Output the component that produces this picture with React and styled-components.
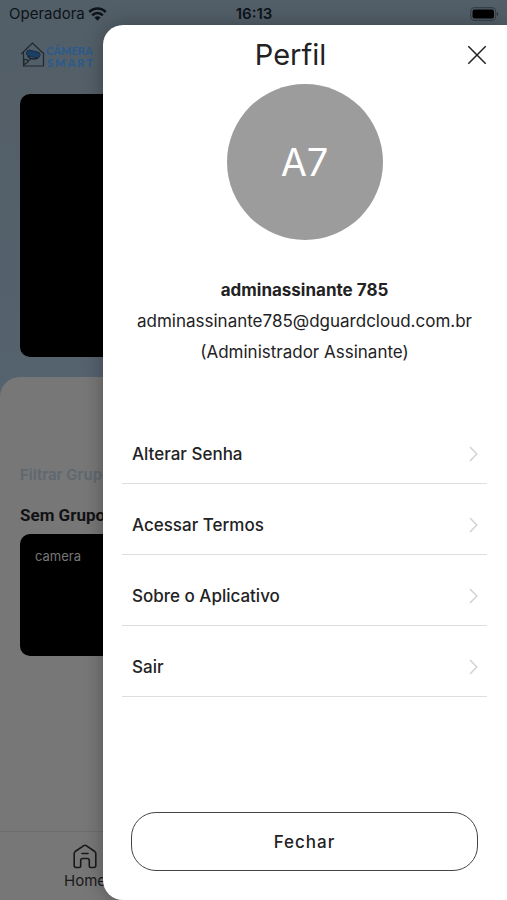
import React from "react";
import styled, { createGlobalStyle } from "styled-components";

const GlobalStyle = createGlobalStyle`
  *, *::before, *::after { box-sizing: border-box; }
  body {
    margin: 0;
    font-family: Inter, "Liberation Sans", sans-serif;
    color: #222224;
  }
  h1, h2, p, ul { margin: 0; padding: 0; }
  button, input { font: inherit; color: inherit; }
`;

const Screen = styled.div`
  position: relative;
  min-height: 100vh;
  overflow: hidden;
  display: flex;
  flex-direction: column;
  background: linear-gradient(#525f68 0, #545f68 100px, #55636f 400px);
`;

const StatusBar = styled.header`
  display: grid;
  grid-template-columns: 1fr auto 1fr;
  align-items: center;
  height: 27px;
  padding: 0 8px 0 9px;
  font-size: 15px;
  color: #0d1318;
`;

const Carrier = styled.span`
  display: flex;
  align-items: center;
  gap: 3px;
`;

const Clock = styled.span`
  font-weight: 600;
`;

const BatteryIcon = styled.svg`
  justify-self: end;
`;

const Brand = styled.div`
  display: flex;
  align-items: center;
  height: 67px;
  padding: 0 20px 11px;
`;

const Feature = styled.div`
  height: 263px;
  margin: 0 20px;
  border-radius: 10px;
  background: #000;
`;

const Sheet = styled.main`
  flex: 1;
  display: flex;
  flex-direction: column;
  margin-top: 20px;
  padding-top: 85px;
  border-radius: 20px 20px 0 0;
  background: #777;
`;

const Filter = styled.input`
  display: block;
  height: 24px;
  margin: 0 20px;
  padding: 0;
  border: 0;
  background: none;
  font-size: 15px;
  font-weight: 600;
  &::placeholder { color: #5f686f; opacity: 1; }
`;

const GroupTitle = styled.h2`
  margin: 17px 20px 7px;
  font-size: 17px;
  line-height: 24px;
  font-family: Roboto, sans-serif;
  font-weight: 700;
  color: #121214;
`;

const CameraCard = styled.section`
  height: 122px;
  margin: 0 20px;
  padding: 13px 15px;
  border-radius: 10px;
  background: #000;
  color: #777;
  font-size: 13px;
  line-height: 18px;
`;

const TabBar = styled.nav`
  display: flex;
  height: 69px;
  margin-top: auto;
  padding: 12px 58px 0;
  border-top: 1px solid #6d6d6d;
`;

const Tab = styled.a`
  display: flex;
  flex-direction: column;
  align-items: center;
  gap: 2px;
  width: 54px;
  color: #19191b;
  font-size: 15px;
  line-height: 20px;
  text-decoration: none;
`;

const Drawer = styled.aside`
  position: absolute;
  inset: 25px 0 0 103px;
  display: flex;
  flex-direction: column;
  padding: 0 20px 29px 19px;
  border-radius: 20px 0 0 20px;
  background: #fff;
  box-shadow: 0 0 20px rgba(0, 0, 0, 0.3);
`;

const DrawerHeader = styled.header`
  display: grid;
  grid-template-columns: 1fr 20px;
  gap: 8px;
  align-items: center;
  height: 59px;
`;

const Title = styled.h1`
  text-align: center;
  font-size: 29px;
  font-weight: 400;
  line-height: 40px;
`;

const CloseButton = styled.button`
  display: flex;
  padding: 0;
  border: 0;
  background: none;
  cursor: pointer;
`;

const Avatar = styled.div`
  display: grid;
  place-items: center;
  align-self: center;
  width: 156px;
  height: 156px;
  border-radius: 50%;
  background: #9c9c9c;
  color: #fff;
  font-size: 38px;
`;

const Identity = styled.div`
  margin-top: 35px;
  text-align: center;
  font-size: 17px;
  line-height: 31px;
  white-space: nowrap;
`;

const Name = styled.p`
  font-weight: 700;
`;

const Menu = styled.ul`
  margin-top: 45px;
  list-style: none;
`;

const MenuButton = styled.button`
  display: flex;
  align-items: center;
  justify-content: space-between;
  width: 100%;
  height: 71px;
  padding: 11px 9px 0 10px;
  border: 0;
  border-bottom: 1px solid #dedede;
  background: none;
  font-size: 17px;
  font-weight: 500;
  text-align: left;
  cursor: pointer;
`;

const DismissButton = styled.button`
  height: 59px;
  margin: auto 9px 0;
  border: 1px solid #454547;
  border-radius: 25px;
  background: none;
  font-size: 17px;
  font-weight: 500;
  letter-spacing: 1px;
  cursor: pointer;
`;

const menuItems = ["Alterar Senha", "Acessar Termos", "Sobre o Aplicativo", "Sair"];

function WifiIcon() {
  return (
    <svg width="19" height="14" viewBox="0 0 19 14" aria-hidden="true">
      <path d="M1.3 5a11.300 11.300 0 0 1 16.400 0M4.200 8.300a7.300 7.300 0 0 1 10.600 0" fill="none" stroke="currentColor" strokeWidth="2.600" />
      <path d="M6.500 10.500a4.200 4.200 0 0 1 6 0L9.500 13.700z" fill="currentColor" />
    </svg>
  );
}

function Battery() {
  return (
    <BatteryIcon width="29" height="14" viewBox="0 0 29 14" aria-hidden="true">
      <rect x=".7" y=".7" width="25" height="12.6" rx="3.8" fill="none" stroke="#35414a" strokeWidth="1.2" />
      <rect x="2.5" y="2.5" width="21.5" height="9" rx="2" fill="#000" />
      <path d="M27 5v4c1.600-.6 1.600-3.400 0-4z" fill="#26313a" />
    </BatteryIcon>
  );
}

function Logo() {
  return (
    <svg width="78" height="28" viewBox="0 0 78 28" role="img" aria-label="Câmera Smart">
      <path d="M1.200 13 12.500 2 24 13M3.500 11.500V25h20V11.500" fill="none" stroke="#20282f" strokeWidth="1.200" />
      <g transform="rotate(13 13 14)">
        <rect x="6" y="10" width="14" height="6" rx="3" fill="#1c3f66" stroke="#17283a" strokeWidth=".8" />
        <path d="M8 16.200c3 2.300 7 2.300 10.500-.4" fill="none" stroke="#17283a" strokeWidth="1.400" />
      </g>
      <path d="M4 18.500c2-.5 3.500.3 4.500 2L4 24zM8 19.500l3-1" fill="none" stroke="#20282f" strokeWidth="1.100" />
      <g fill="#2b5b8c" fontFamily="Lato, sans-serif" fontWeight="900">
        <text x="26" y="14" fontSize="11">CÂMERA</text>
        <text x="27" y="26" fontSize="11" letterSpacing="2">SMART</text>
      </g>
    </svg>
  );
}

function HomeIcon() {
  return (
    <svg width="24" height="25" viewBox="0 0 24 25" fill="none" stroke="currentColor" strokeWidth="1.600" strokeLinejoin="round" strokeLinecap="round" aria-hidden="true">
      <path d="M1.200 9.600Q1.200 8.300 2.200 7.500L10.800 1.600q1.200-.8 2.400 0l8.600 5.900q1 .8 1 2.100V21.500q0 2-2 2h-3q-1.500 0-1.500-1.500v-5.500q0-2-2-2H9.700q-2 0-2 2V22q0 1.500-1.500 1.500H3.200q-2 0-2-2z" />
      <path d="M9 9.500h6" />
    </svg>
  );
}

export default function App() {
  return (
    <>
      <GlobalStyle />
      <Screen>
        <StatusBar>
          <Carrier>Operadora <WifiIcon /></Carrier>
          <Clock>16:13</Clock>
          <Battery />
        </StatusBar>
        <Brand><Logo /></Brand>
        <Feature />
        <Sheet>
          <Filter type="text" placeholder="Filtrar Grupos" aria-label="Filtrar Grupos" />
          <GroupTitle>Sem Grupo</GroupTitle>
          <CameraCard>camera</CameraCard>
          <TabBar>
            <Tab href="#home"><HomeIcon />Home</Tab>
          </TabBar>
        </Sheet>
        <Drawer aria-label="Perfil">
          <DrawerHeader>
            <Title>Perfil</Title>
            <CloseButton type="button" aria-label="Fechar perfil">
              <svg width="20" height="20" viewBox="0 0 20 20" stroke="currentColor" strokeWidth="1.500" aria-hidden="true">
                <path d="m1.300 1.300 17.400 17.400M18.700 1.300 1.300 18.700" />
              </svg>
            </CloseButton>
          </DrawerHeader>
          <Avatar>A7</Avatar>
          <Identity>
            <Name>adminassinante 785</Name>
            <p>adminassinante785@dguardcloud.com.br</p>
            <p>(Administrador Assinante)</p>
          </Identity>
          <Menu>
            {menuItems.map((label) => (
              <li key={label}>
                <MenuButton type="button">
                  {label}
                  <svg width="9" height="16" viewBox="0 0 9 16" fill="none" stroke="#d2d2d2" strokeWidth="1.500" aria-hidden="true">
                    <path d="m1 1 6.800 7L1 15" />
                  </svg>
                </MenuButton>
              </li>
            ))}
          </Menu>
          <DismissButton type="button">Fechar</DismissButton>
        </Drawer>
      </Screen>
    </>
  );
}
